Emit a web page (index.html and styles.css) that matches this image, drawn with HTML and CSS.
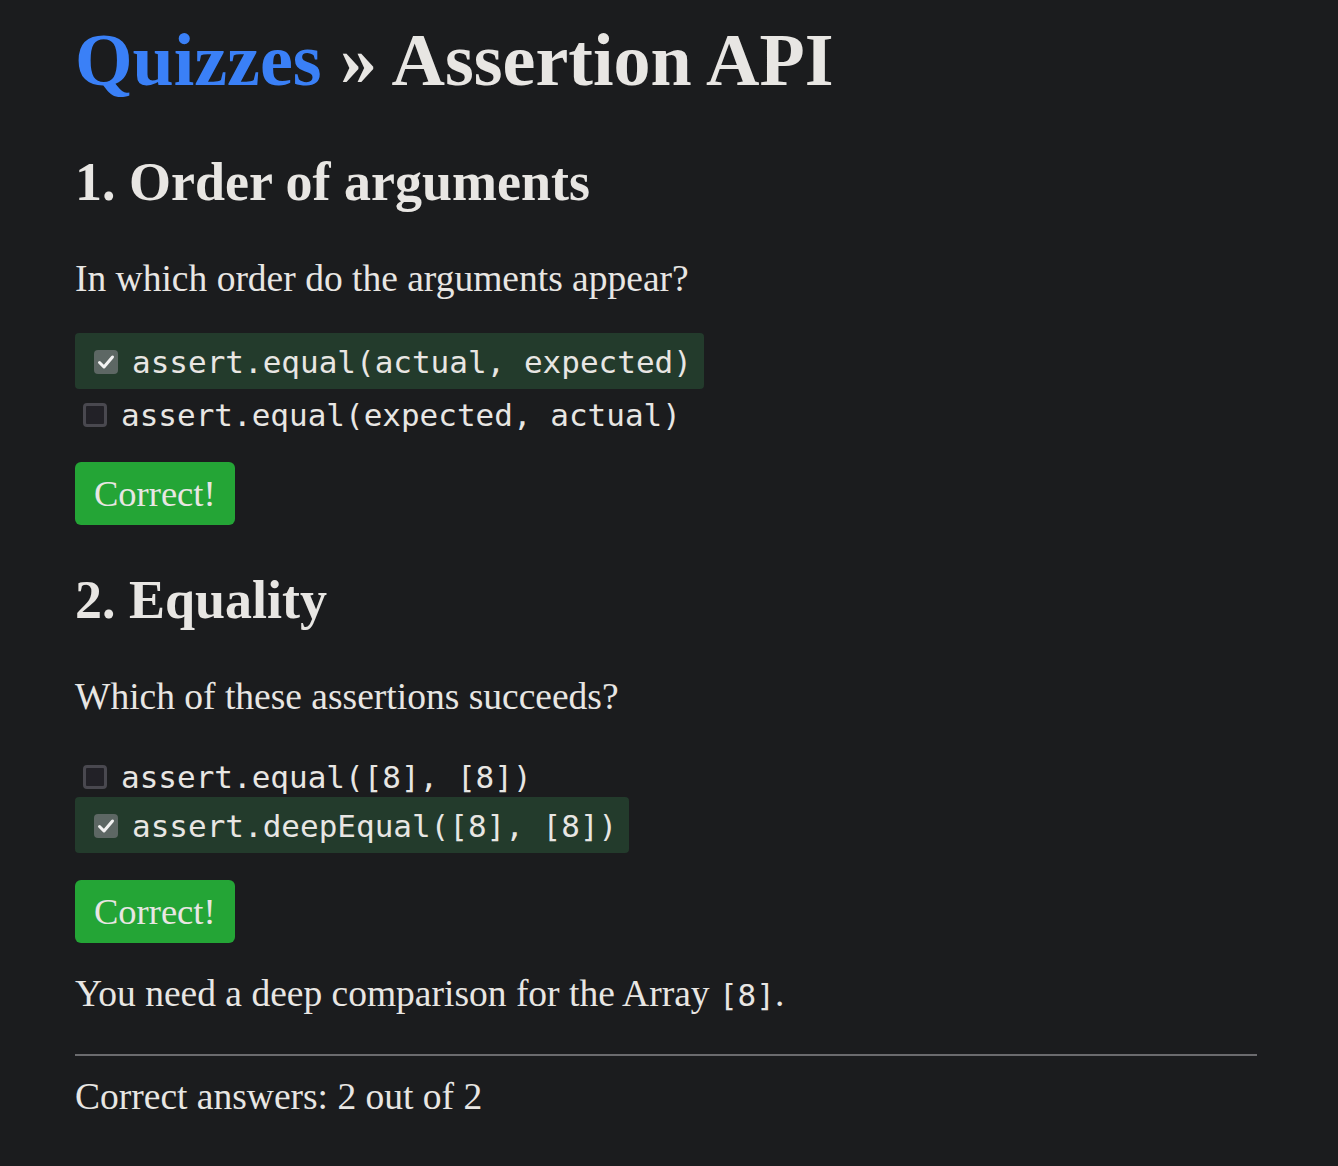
FILE: index.html
```html
<!DOCTYPE html>
<html lang="en">
<head>
<meta charset="utf-8">
<title>Quizzes » Assertion API</title>
<link rel="stylesheet" href="styles.css">
</head>
<body>
<main class="page">
  <h1 class="title"><a class="crumb" href="#">Quizzes</a> » Assertion API</h1>

  <section class="quiz">
    <h2 class="q-title">1. Order of arguments</h2>
    <p class="q-text">In which order do the arguments appear?</p>
    <div class="options">
      <label class="option selected"><span class="box checked"><svg viewBox="0 0 24 24" width="24" height="24"><path d="M5.5 12.5l4.5 4.5 8.5-10" fill="none" stroke="#f2f2f2" stroke-width="3" stroke-linecap="round" stroke-linejoin="round"/></svg></span><code class="code">assert.equal(actual, expected)</code></label>
      <label class="option"><span class="box"></span><code class="code">assert.equal(expected, actual)</code></label>
    </div>
    <button class="result" type="button">Correct!</button>
  </section>

  <section class="quiz">
    <h2 class="q-title">2. Equality</h2>
    <p class="q-text">Which of these assertions succeeds?</p>
    <div class="options">
      <label class="option"><span class="box"></span><code class="code">assert.equal([8], [8])</code></label>
      <label class="option selected"><span class="box checked"><svg viewBox="0 0 24 24" width="24" height="24"><path d="M5.5 12.5l4.5 4.5 8.5-10" fill="none" stroke="#f2f2f2" stroke-width="3" stroke-linecap="round" stroke-linejoin="round"/></svg></span><code class="code">assert.deepEqual([8], [8])</code></label>
    </div>
    <button class="result" type="button">Correct!</button>
    <p class="explain">You need a deep comparison for the Array <code class="inline">[8]</code>.</p>
  </section>

  <hr class="rule">
  <p class="score">Correct answers: 2 out of 2</p>
</main>
</body>
</html>
```

FILE: styles.css
```css
html, body {
  margin: 0;
  background: #1b1c1e;
}
body {
  color: #e8e6e3;
  font-family: "Liberation Serif", "Times New Roman", serif;
}
.page {
  padding: 0 81px 40px 75px;
}
.title {
  margin: 13px 0 0;
  font-size: 74px;
  line-height: 94px;
  font-weight: bold;
}
.crumb {
  color: #3a80f7;
  text-decoration: none;
}
.quiz {
  display: flex;
  flex-direction: column;
  align-items: flex-start;
}
.q-title {
  margin: 40px 0 0;
  font-size: 54px;
  line-height: 70px;
  font-weight: bold;
}
.q-text {
  margin: 40px 0 0;
  font-size: 37.5px;
  line-height: 44px;
}
.options {
  margin-top: 32px;
  display: flex;
  flex-direction: column;
  align-items: flex-start;
}
.option {
  display: flex;
  align-items: center;
  box-sizing: border-box;
  height: 46px;
  padding: 6px 8px 0;
  gap: 14px;
}
.option.selected {
  height: 56px;
  background: #233b2c;
  border-radius: 4px;
  padding: 2px 12px 0 19px;
}
.box {
  width: 24px;
  height: 24px;
  box-sizing: border-box;
  border: 3px solid #49484f;
  border-radius: 4px;
  background: #222127;
  display: flex;
}
.box.checked {
  border: none;
  background: #5d6764;
}
.code {
  font-family: "DejaVu Sans Mono", "Liberation Mono", monospace;
  font-size: 31px;
  line-height: 1;
  color: #e8e6e3;
}
.result {
  margin-top: 27px;
  height: 63px;
  padding: 0 19px;
  border: none;
  border-radius: 6px;
  background: #24a536;
  color: #e8e6e3;
  font-family: "Liberation Serif", "Times New Roman", serif;
  font-size: 36.5px;
}
.explain {
  margin: 29px 0 0;
  font-size: 37.5px;
  line-height: 44px;
}
.inline {
  font-family: "DejaVu Sans Mono", "Liberation Mono", monospace;
  font-size: 31px;
  line-height: 1;
}
.rule {
  margin: 38px 0 0;
  height: 0;
  border: none;
  border-top: 2px solid #6b6b6e;
}
.score {
  margin: 19px 0 0;
  font-size: 37.5px;
  line-height: 44px;
}
```
